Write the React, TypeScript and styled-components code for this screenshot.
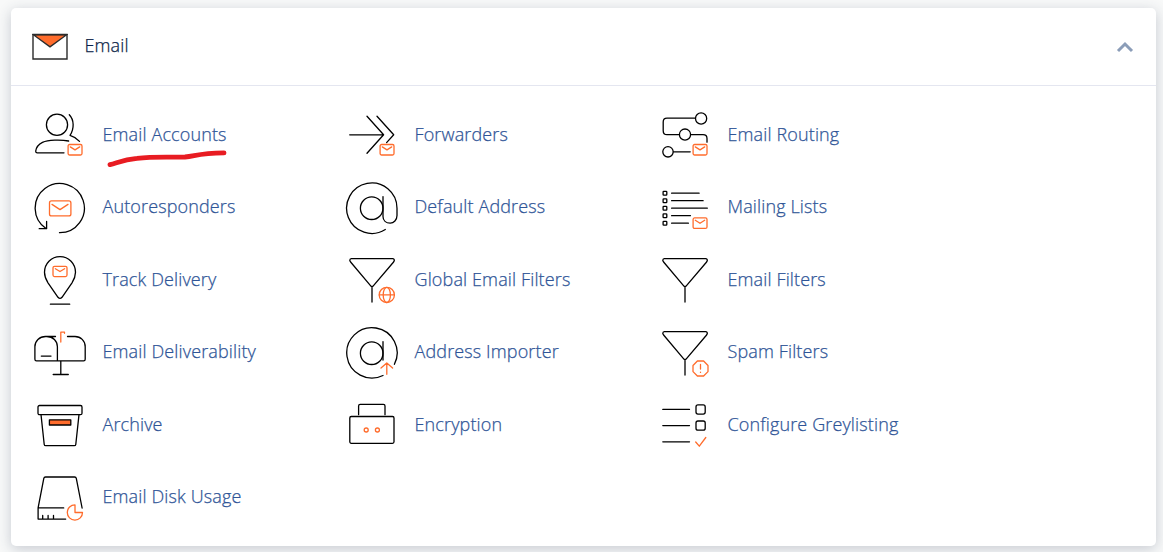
import { useState, ReactNode } from 'react';
import styled, { createGlobalStyle } from 'styled-components';

const GlobalStyle = createGlobalStyle`
  * {
    box-sizing: border-box;
  }
  body {
    margin: 0;
    background-color: #f8f9f9;
    font-family: 'Open Sans', 'Noto Sans', sans-serif;
    overflow: hidden;
  }
`;

// Page wrapper around the panel
const Page = styled.main`
  height: 552px;
  padding: 8px 7px 6px 11px;
`;

// White card that holds the header and the tools
const Panel = styled.section`
  height: 538px;
  background-color: #fff;
  border-radius: 5px;
  box-shadow: 0 3px 14px rgba(40, 55, 85, 0.24);
`;

const PanelHeader = styled.header`
  display: flex;
  align-items: center;
  height: 78px;
  padding: 0 22px 0 21px;
  border-bottom: 1px solid #e4e6f0;
`;

const PanelTitle = styled.h2`
  flex: 1;
  margin: 0 0 3px 16.5px;
  font-size: 18px;
  font-weight: 300;
  letter-spacing: 0.13px;
  line-height: 24px;
  color: #0c1f48;
  -webkit-text-stroke: 0.25px;
`;

const ToggleButton = styled.button<{ $open: boolean }>`
  display: flex;
  padding: 0;
  border: none;
  background: none;
  cursor: pointer;
  transform: ${({ $open }) => ($open ? 'none' : 'rotate(180deg)')};
`;

// Three column grid of tools
const ToolGrid = styled.div`
  display: grid;
  grid-template-columns: 312px 313px 312px;
  grid-auto-rows: 72.45px;
  padding: 13px 0 0 22px;
`;

const ToolLink = styled.a`
  position: relative;
  display: flex;
  align-items: center;
  gap: 15.5px;
  font-size: 18px;
  font-weight: 300;
  letter-spacing: 0.13px;
  line-height: 24px;
  color: #2f5597;
  text-decoration: none;
  -webkit-text-stroke: 0.25px;
`;

const ToolName = styled.span`
  padding-bottom: 2.4px;
  white-space: nowrap;
`;

// Line icon, 54px square
const Icon = styled.svg`
  flex: none;
  width: 54px;
  height: 54px;
  fill: none;
  stroke: #000;
  stroke-width: 1.3;
  stroke-linecap: round;
  stroke-linejoin: round;
`;

const Accent = styled.g`
  stroke: #ff6c2c;
`;

// Hand drawn underline over the highlighted tool
const Scribble = styled.svg`
  position: absolute;
  left: 72px;
  top: 48px;
  width: 124px;
  height: 20px;
  fill: none;
  stroke: #e81c22;
  stroke-width: 4.8;
  stroke-linecap: round;
  stroke-linejoin: round;
  pointer-events: none;
`;

const MiniMail = ({ y = 36.5 }: { y?: number }) => (
  <Accent transform={`translate(35.1 ${y})`}>
    <rect width="13.9" height="10.5" rx="1.5" />
    <path d="M2.2 2.4 6.9 5.4 11.6 2.4" />
  </Accent>
);

const Funnel = () => (
  <path d="M6.3 5.6H47.7Q49.3 5.6 49.3 7.6L48.6 9 28.5 32.6Q27 34.6 25.5 32.6L5.6 9 4.8 7.6Q4.8 5.6 6.3 5.6ZM27 34V49" />
);

const tools: { name: string; icon: ReactNode; marked?: boolean }[] = [
  {
    name: 'Email Accounts',
    marked: true,
    icon: (
      <>
        <circle cx="24" cy="16.8" r="10.6" />
        <path d="M36.3 6.8C41.2 11.8 41.4 20.6 37 27.3 40.6 28.4 44.2 30.6 46.5 33.3M35.6 33C28 31.5 15 31.7 9.5 34.4 5.4 36.4 3.2 39.5 2.7 43.2Q2.7 44.8 4.3 44.8H31" />
        <MiniMail />
      </>
    ),
  },
  {
    name: 'Forwarders',
    icon: (
      <>
        <path d="M4.7 26.8H38.4M22 8.2 38.6 26.8 22 45.3M32 8.2 48.7 26.8 41.6 34.6" />
        <MiniMail />
      </>
    ),
  },
  {
    name: 'Email Routing',
    icon: (
      <>
        <circle cx="43.1" cy="10.5" r="5.6" />
        <circle cx="27" cy="26.6" r="5.6" />
        <circle cx="10" cy="43.8" r="5.2" />
        <path d="M37.4 10.1H9Q5.2 10.1 5.2 14V22.7Q5.2 26.7 9 26.7H21.3M32.7 26.7H45Q49 26.7 49 30.4V34.2M15.5 43.8H32.2" />
        <MiniMail />
      </>
    ),
  },
  {
    name: 'Autoresponders',
    icon: (
      <>
        <path d="M26.5 51.7A24.6 24.6 0 1 0 13 47.5M6.2 47.7H13.6V40.5" />
        <Accent>
          <rect x="16.5" y="19.9" width="21.4" height="15" rx="2" />
          <path d="M19 23.4 27 28.6 35 23.4" />
        </Accent>
      </>
    ),
  },
  {
    name: 'Default Address',
    icon: (
      <>
        <path d="M40.3 48.5A25.2 25.2 0 1 1 52 27.2V34.5C52 39 48.7 42.2 45.2 42.2 41 42.2 38 39.5 38 35.5V15.6" />
        <circle cx="26.7" cy="27.2" r="11.3" />
      </>
    ),
  },
  {
    name: 'Mailing Lists',
    icon: (
      <>
        {[12.2, 19.7, 27.2, 34.7, 42.2].map((y, i) => (
          <g key={y}>
            <rect x="5.1" y={y - 1.8} width="3.7" height="3.7" rx="0.7" />
            <path d={`M13.6 ${y}H${[41.1, 45.1, 49.3, 32.4, 30.4][i]}`} />
          </g>
        ))}
        <MiniMail y={36.9} />
      </>
    ),
  },
  {
    name: 'Track Delivery',
    icon: (
      <>
        <path d="M27 3.6C35.8 3.6 42.5 10.7 42.5 19.3 42.5 22.8 41.2 26.4 39 29.8L29 44.3Q27 46.5 25 44.3L15 29.8C12.8 26.4 11.5 22.8 11.5 19.3 11.5 10.7 18.2 3.6 27 3.6ZM17.4 51.2H36.7" />
        <Accent>
          <rect x="20" y="13.3" width="14" height="10.3" rx="1.5" />
          <path d="M22.4 15.7 27 18.5 31.6 15.7" />
        </Accent>
      </>
    ),
  },
  {
    name: 'Global Email Filters',
    icon: (
      <>
        <Funnel />
        <Accent>
          <circle cx="41.8" cy="41.9" r="7.6" />
          <ellipse cx="41.8" cy="41.9" rx="3.6" ry="7.6" />
          <path d="M34.3 41.9H49.3" />
        </Accent>
      </>
    ),
  },
  { name: 'Email Filters', icon: <Funnel /> },
  {
    name: 'Email Deliverability',
    icon: (
      <>
        <path d="M22.5 10.5H12.5C6.4 10.5 1.9 15 1.9 20.7V33.2Q1.9 34.8 3.5 34.8H50.6Q52.2 34.8 52.2 33.2V20.7C52.2 14.8 47.7 10.5 42 10.5H34.5M13.8 10.5C20 10.5 24.4 15 24.4 20.7V34.6M8.3 30.1H18M27.8 34.8V48.5M20.2 48.5H35.3" />
        <Accent>
          <path d="M27.8 16V6.2H31.5V7.3" />
        </Accent>
      </>
    ),
  },
  {
    name: 'Address Importer',
    icon: (
      <>
        <path d="M38 49.5A25.2 25.2 0 1 1 49.4 38.3M38 15.6V34" />
        <circle cx="26.7" cy="27.2" r="11.3" />
        <Accent>
          <path d="M41.8 48.3V37M36 42 41.8 36.9 47.6 42" />
        </Accent>
      </>
    ),
  },
  {
    name: 'Spam Filters',
    icon: (
      <>
        <Funnel />
        <Accent>
          <path d="M39.4 35H45.6L50 39.5V45.6L45.6 50H39.4L35 45.6V39.5ZM42.5 38.5V43M42.5 46.1V46.4" />
        </Accent>
      </>
    ),
  },
  {
    name: 'Archive',
    icon: (
      <>
        <rect x="5" y="7.5" width="44" height="9.2" rx="1.5" />
        <path d="M8 16.6 11.2 46.3Q11.4 47.7 12.8 47.7H41.2Q42.6 47.7 42.8 46.3L46 16.6" />
        <rect x="16.4" y="21.8" width="21.4" height="5.2" fill="#ff6c2c" />
      </>
    ),
  },
  {
    name: 'Encryption',
    icon: (
      <>
        <rect x="4.8" y="18.5" width="44.2" height="26.8" rx="1.5" />
        <path d="M13.6 16.7V8Q13.6 6.4 15.2 6.4H38.4Q40 6.4 40 8V16.7" />
        <Accent>
          <circle cx="21.2" cy="32" r="2" />
          <circle cx="32.4" cy="32" r="2" />
        </Accent>
      </>
    ),
  },
  {
    name: 'Configure Greylisting',
    icon: (
      <>
        <path d="M4.8 11.4H31.5M4.8 27.6H31.5M4.8 43.8H31.5" />
        <rect x="38" y="6.9" width="9.2" height="9.2" rx="2" />
        <rect x="38" y="23" width="9.2" height="9.2" rx="2" />
        <Accent>
          <path d="M37.7 44 41.3 48.2 47.8 39.5" />
        </Accent>
      </>
    ),
  },
  {
    name: 'Email Disk Usage',
    icon: (
      <>
        <path d="M30.7 37.9H5.1L10.8 8.4Q11.1 7 12.5 7H41.6Q43 7 43.3 8.4L49.1 38M5.1 37.9V49.1H32.7M9.7 45.4V49M15.1 45.4V49M20.5 45.4V49" />
        <Accent>
          <path d="M42 34.9A7.6 7.6 0 1 0 49.5 42.5H42Z" />
        </Accent>
      </>
    ),
  },
];

const App = () => {
  const [open, setOpen] = useState(true);

  return (
    <Page>
      <GlobalStyle />
      <Panel>
        <PanelHeader>
          <svg width="36" height="28" viewBox="0 0 36 28" fill="none" stroke="#2b2b2b" strokeWidth="1.4">
            <path d="M1.3 1.7H34.7L18 13.8Z" fill="#ff6c2c" />
            <path d="M1 1.5H35V26H1Z" />
          </svg>
          <PanelTitle>Email</PanelTitle>
          <ToggleButton $open={open} onClick={() => setOpen(!open)} aria-label="Toggle section">
            <svg width="18" height="12" viewBox="0 0 18 12" fill="none" stroke="#8b9db8" strokeWidth="3">
              <path d="M2 10 9 3 16 10" />
            </svg>
          </ToggleButton>
        </PanelHeader>
        {open && (
          <ToolGrid>
            {tools.map((tool) => (
              <ToolLink key={tool.name} href="#">
                <Icon viewBox="0 0 54 54">{tool.icon}</Icon>
                <ToolName>{tool.name}</ToolName>
                {tool.marked && (
                  <Scribble viewBox="0 0 124 20">
                    <path d="M5 17.6C12 16 18 12.5 32 11.3 50 9.3 66 10.5 80 10 91 8.9 94 6.3 119 5.9" />
                  </Scribble>
                )}
              </ToolLink>
            ))}
          </ToolGrid>
        )}
      </Panel>
    </Page>
  );
};

export default App;
